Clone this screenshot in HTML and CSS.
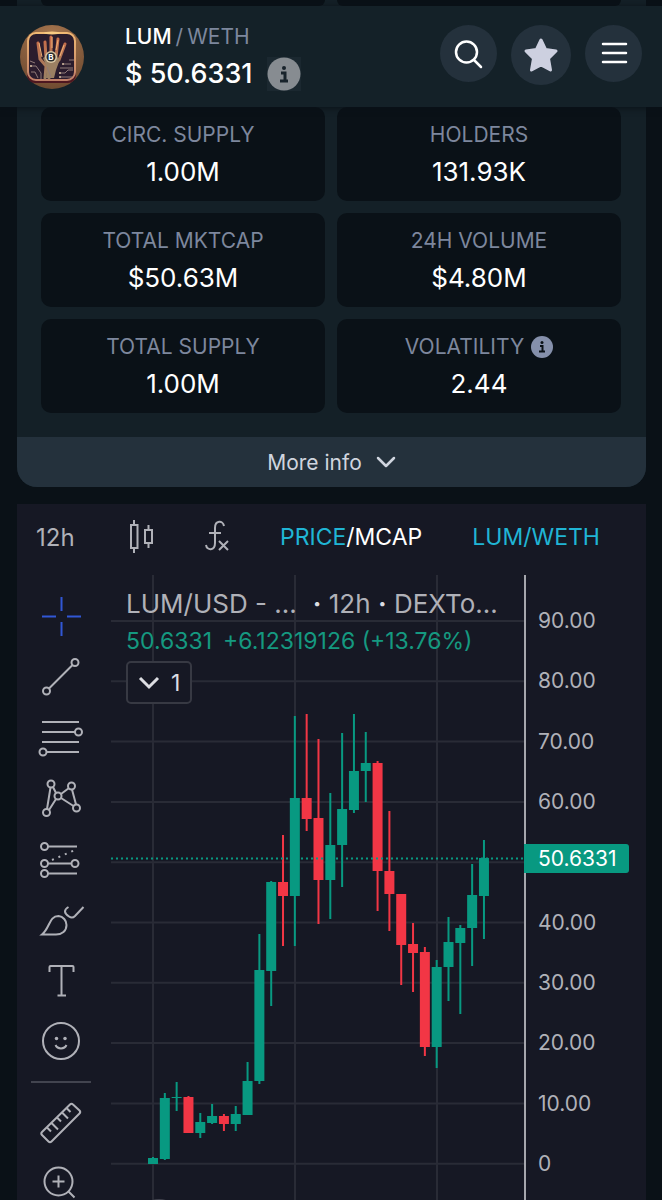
FILE: index.html
```html
<!DOCTYPE html>
<html lang="en">
<head>
  <meta charset="UTF-8">
  <meta name="viewport" content="width=device-width, initial-scale=1.0">
  <title>LUM/WETH</title>
  <link rel="stylesheet" href="styles.css">
</head>
<body>

  <div class="panel panel-peek">
    <div class="peek"></div>
    <div class="peek"></div>
  </div>

  <header class="header">
    <svg class="avatar" width="64" height="64" viewBox="0 0 64 64">
      <defs>
        <radialGradient id="gold" cx="50%" cy="20%" r="80%">
          <stop offset="0" stop-color="#a97850"/>
          <stop offset="1" stop-color="#704b31"/>
        </radialGradient>
        <linearGradient id="frame" x1="0" y1="0" x2="0" y2="1">
          <stop offset="0" stop-color="#f0b873"/>
          <stop offset="1" stop-color="#c08069"/>
        </linearGradient>
        <linearGradient id="hand" x1="0" y1="0" x2="0" y2="1">
          <stop offset="0" stop-color="#c96b48"/>
          <stop offset="1" stop-color="#9b8063"/>
        </linearGradient>
      </defs>
      <circle cx="32" cy="32" r="32" fill="url(#gold)"/>
      <rect x="7" y="9" width="49" height="49" rx="8" fill="#4e1720"/>
      <rect x="8" y="8" width="47" height="47" rx="8" fill="#2a1c2d" stroke="url(#frame)" stroke-width="2"/>
      <path d="M25 53L26 41L20 34L18 18M26 33L25 17M31 31L31 12M36 32L38 14M39 35L45 19M38 36L29 45V53" fill="none" stroke="url(#hand)" stroke-width="3" stroke-linecap="round" stroke-linejoin="round"/>
      <path d="M23 33L31 28L40 34L36 45L34 53H26L27 43z" fill="#9b8063"/>
      <path d="M32 12V23M38 15L36 25M19 18L22 32M44 20L40 31" fill="none" stroke="#efb175" stroke-width="1"/>
      <path d="M10 41H16L21 48V54M11 47H15L18 53M10 36L15 38M40 43H53M39 48H45L48 45H53M40 52H52M43 39H51M49 35H54M27 42L31 52" fill="none" stroke="#8f7a78" stroke-width="1"/>
      <circle cx="11" cy="41" r="1" fill="#d6bca1"/>
      <circle cx="40" cy="48" r="1" fill="#d6bca1"/>
      <circle cx="43" cy="39" r="1" fill="#d6bca1"/>
      <circle cx="40" cy="52" r="1" fill="#d6bca1"/>
      <ellipse cx="32" cy="8" rx="8" ry="1.500" fill="#f8ca82"/>
      <circle cx="31" cy="32" r="6" fill="#d6c4a2"/>
      <circle cx="31" cy="32" r="4.500" fill="#252a2c"/>
      <text class="coin" x="31" y="35" text-anchor="middle">B</text>
    </svg>
    <div class="pair">
      <div class="pair-name">LUM<span class="quote"><i>/</i>WETH</span></div>
      <div class="pair-price">
        <span>$ 50.6331</span>
        <button class="info-btn" aria-label="Price info">
          <svg width="34" height="34" viewBox="0 0 34 34">
            <circle cx="17" cy="17" r="16.500" fill="#878c91"/>
            <circle cx="17" cy="11" r="2" fill="#18232b"/>
            <path d="M14 16H18V24M13 24H21" fill="none" stroke="#18232b" stroke-width="3"/>
          </svg>
        </button>
      </div>
    </div>
    <nav class="actions">
      <button class="round" aria-label="Search">
        <svg width="32" height="32" viewBox="0 0 32 32" fill="none" stroke="#fff" stroke-width="2.5" stroke-linecap="round">
          <circle cx="13.500" cy="14" r="10.500"/>
          <path d="M21 22L28 29"/>
        </svg>
      </button>
      <button class="round round-star" aria-label="Favourite">
        <svg width="36" height="36" viewBox="0 0 36 36">
          <path d="M18 3L22.500 12.500L33 14L25.500 21.500L27.500 33L18 28L8.500 33L10.500 21.500L3 14L13.500 12.500z" fill="#cdd0e0" stroke="#cdd0e0" stroke-width="3" stroke-linejoin="round"/>
        </svg>
      </button>
      <button class="round" aria-label="Menu">
        <svg width="28" height="28" viewBox="0 0 28 28" stroke="#fff" stroke-width="2.500" stroke-linecap="round">
          <path d="M3 4H26M3 13H26M3 22H26"/>
        </svg>
      </button>
    </nav>
  </header>

  <section class="panel panel-main">
    <div class="stats">
      <div class="stat">
        <span class="label">CIRC. SUPPLY</span>
        <span class="value">1.00M</span>
      </div>
      <div class="stat">
        <span class="label">HOLDERS</span>
        <span class="value">131.93K</span>
      </div>
      <div class="stat">
        <span class="label">TOTAL MKTCAP</span>
        <span class="value">$50.63M</span>
      </div>
      <div class="stat">
        <span class="label">24H VOLUME</span>
        <span class="value">$4.80M</span>
      </div>
      <div class="stat">
        <span class="label">TOTAL SUPPLY</span>
        <span class="value">1.00M</span>
      </div>
      <div class="stat">
        <span class="label">VOLATILITY
          <svg width="22" height="22" viewBox="0 0 22 22">
            <circle cx="11" cy="11" r="11" fill="#8590ab"/>
            <circle cx="11" cy="6.500" r="1.500" fill="#0a1117"/>
            <path d="M9 10H11.500V15.500M8 15.500H14" fill="none" stroke="#0a1117" stroke-width="2"/>
          </svg>
        </span>
        <span class="value">2.44</span>
      </div>
    </div>
    <button class="more">More info
      <svg width="20" height="14" viewBox="0 0 20 14">
        <path d="M2 3L10 11L18 3" fill="none" stroke="#d0d5df" stroke-width="2.500" stroke-linecap="round" stroke-linejoin="round"/>
      </svg>
    </button>
  </section>

  <section class="chart">
    <div class="chart-top">
      <button class="interval">12h</button>
      <button aria-label="Candles">
        <svg width="26" height="36" viewBox="0 0 26 36" fill="none" stroke="#b0b1b8" stroke-width="2">
          <path d="M3 6H9.500V29H3zM6 1V6M6 29V34M17 11H24V24H17zM20.500 6V11M20.500 24V29"/>
        </svg>
      </button>
      <button aria-label="Indicators">
        <svg width="26" height="36" viewBox="0 0 26 36" fill="none" stroke="#b0b1b8" stroke-width="2">
          <path d="M20 7C19 1 11 1 11 9V24C11 32 3 32 2 26M5 14H17M15 22L24 31M24 22L15 31"/>
        </svg>
      </button>
      <button class="cyan">PRICE<span class="white">/MCAP</span></button>
      <button class="cyan">LUM/WETH</button>
    </div>

    <div class="chart-body">
      <div class="tools">
        <button class="tool" aria-label="Cross">
          <svg class="blue" viewBox="0 0 48 48"><path d="M5 24.500H19M30 24.500H44M24.500 5V19M24.500 30V44"/></svg>
        </button>
        <button class="tool" aria-label="Trend line">
          <svg viewBox="0 0 48 48"><circle cx="9.500" cy="38" r="3.500"/><circle cx="38" cy="9.500" r="3.500"/><path d="M12 35.500L35.500 12"/></svg>
        </button>
        <button class="tool" aria-label="Fib retracement">
          <svg viewBox="0 0 48 48"><path d="M5 8H42M5 18H38M5 28H42M10 38H42"/><circle cx="41.500" cy="18" r="3.500"/><circle cx="6" cy="38" r="3.500"/></svg>
        </button>
        <button class="tool" aria-label="Patterns">
          <svg viewBox="0 0 48 48">
            <path d="M13.500 12.500L10 34M16 12L19 18M12 35L19 24M24 19L32 13M35 14.500L39 29.500M24 23L36.500 31"/>
            <circle cx="14" cy="9" r="3.500"/><circle cx="34.500" cy="11" r="3.500"/><circle cx="21" cy="21" r="3.500"/><circle cx="9.500" cy="37.500" r="3.500"/><circle cx="39.500" cy="33" r="3.500"/>
          </svg>
        </button>
        <button class="tool" aria-label="Prediction">
          <svg viewBox="0 0 48 48">
            <circle cx="7.500" cy="10.500" r="3.500"/><circle cx="7.500" cy="27.500" r="3.500"/><circle cx="38" cy="27.500" r="3.500"/><circle cx="7.500" cy="37.500" r="3.500"/>
            <path d="M11 10.500H40M11 27.500H34.500M11 37.500H40"/>
            <path d="M15 24L38 14" stroke-dasharray="2 5"/>
          </svg>
        </button>
        <button class="tool" aria-label="Brush">
          <svg viewBox="0 0 48 48"><path d="M5 37.500C13 31 12 19 21.500 19A9 9 0 0 1 29.500 28C29.500 34 25 37.500 19 37.500zM31.500 10C26.500 13 27 16 32 19.500C34 21 36 21 38 19L46.500 10"/></svg>
        </button>
        <button class="tool" aria-label="Text">
          <svg viewBox="0 0 48 48"><path d="M12.500 14V9Q12.500 8 13.500 8H35.500Q36.500 8 36.500 9V14M24.500 8V37.500M20.500 37.500H29"/></svg>
        </button>
        <button class="tool" aria-label="Emoji">
          <svg viewBox="0 0 48 48"><circle cx="24" cy="22" r="18"/><circle class="dot" cx="19.500" cy="19.500" r="1.750"/><circle class="dot" cx="28" cy="19.500" r="1.750"/><path d="M18.500 26C20.500 30.500 27.500 30.500 29.500 26"/></svg>
        </button>
        <hr>
        <button class="tool" aria-label="Measure">
          <svg viewBox="0 0 48 48"><path d="M33 6.500Q34.500 5 36 6.500L42.500 12.500Q44 14 42.500 15.500L14.500 43.500Q13 45 11.500 43.500L5 37Q3.500 35.500 5 34zM10 29.500L14 33.500M14.500 25L21 31.500M20 19.500L24 23.500M25 14.500L31 20.500M29.500 10L33.500 14"/></svg>
        </button>
        <button class="tool" aria-label="Zoom in">
          <svg viewBox="0 0 48 48"><circle cx="21.500" cy="22.500" r="14"/><path d="M15.500 22.500H27.500M21.500 16.500V28.500M31.500 32.500L37.500 38.500"/></svg>
        </button>
      </div>

      <div class="plot">
        <svg id="candles" viewBox="111 575 414 625" preserveAspectRatio="xMinYMin slice"></svg>
        <div class="legend">
          <div class="legend-title">
            <span>LUM/USD - ...</span>
            <span><b>·</b> 12h <b>·</b> DEXTo...</span>
          </div>
          <div class="legend-values">
            <span>50.6331</span>
            <span>+6.12319126 (+13.76%)</span>
          </div>
          <button class="legend-btn">
            <svg width="22" height="14" viewBox="0 0 22 14"><path d="M2 2L11 11L20 2" fill="none" stroke="#dcdde2" stroke-width="3"/></svg>
            1
          </button>
        </div>
      </div>

      <div class="axis">
        <ul>
          <li>90.00</li>
          <li>80.00</li>
          <li>70.00</li>
          <li>60.00</li>
          <li class="current"><span>50.6331</span></li>
          <li>40.00</li>
          <li>30.00</li>
          <li>20.00</li>
          <li>10.00</li>
          <li>0</li>
        </ul>
      </div>
    </div>
  </section>

  <script src="chart.js"></script>
</body>
</html>
```
FILE: styles.css
```css
* {
  box-sizing: border-box;
}
body {
  margin: 0;
  height: 100vh;
  overflow: hidden;
  display: flex;
  flex-direction: column;
  background: #0a1117;
  color: #fff;
  font-family: Inter, "Liberation Sans", sans-serif;
}
button {
  margin: 0;
  padding: 0;
  border: 0;
  background: none;
  color: inherit;
  font: inherit;
}
svg {
  display: block;
}

/* stats panel */
.panel {
  flex: none;
  margin: 0 16px 0 17px;
  background: #142027;
}
.panel-peek {
  display: grid;
  grid-template-columns: 1fr 1fr;
  gap: 12px;
  padding: 0 25px 0 24px;
}
.peek {
  height: 6px;
  background: #0a1117;
  border-radius: 0 0 6px 6px;
}
.panel-main {
  border-radius: 0 0 20px 20px;
  overflow: hidden;
}
.stats {
  display: grid;
  grid-template-columns: 1fr 1fr;
  gap: 12px;
  padding: 0 25px 24px 24px;
}
.stat {
  height: 94px;
  padding-top: 11px;
  border-radius: 10px;
  background: #0a1117;
  text-align: center;
}
.label,
.value {
  display: flex;
  justify-content: center;
  align-items: center;
}
.label {
  gap: 7px;
  color: #7d879d;
  font-size: 21px;
  line-height: 34px;
}
.value {
  font-size: 26px;
  line-height: 40px;
}
.more {
  display: flex;
  justify-content: center;
  align-items: center;
  gap: 14px;
  width: 100%;
  height: 50px;
  background: #24313c;
  color: #d0d5df;
  font-size: 21px;
}

/* header */
.header {
  display: flex;
  align-items: center;
  flex: none;
  height: 101px;
  padding: 0 20px;
  background: #142128;
  box-shadow: 0 1px 6px #0a1117;
  position: relative;
}
.coin {
  fill: #fff;
  font-size: 8px;
  font-weight: 700;
}
.pair {
  flex: 1;
  margin-left: 41px;
  white-space: nowrap;
}
.pair-name {
  font-size: 21px;
  font-weight: 500;
  line-height: 34px;
}
.quote {
  color: #7d879d;
  font-weight: 400;
}
.quote i {
  margin: 0 4px;
  font-style: normal;
}
.pair-price {
  display: flex;
  align-items: center;
  gap: 14px;
  font-size: 27px;
  font-weight: 500;
  line-height: 40px;
}
.info-btn {
  background: #1b2830;
}
.actions {
  display: flex;
  align-items: flex-start;
  gap: 14px;
  padding-bottom: 3px;
}
.round {
  display: flex;
  align-items: center;
  justify-content: center;
  width: 57px;
  height: 57px;
  border-radius: 50%;
  background: #24313c;
}
.round-star {
  width: 60px;
  height: 60px;
}

/* chart */
.chart {
  flex: 1;
  min-height: 0;
  display: flex;
  flex-direction: column;
  margin: 17px 16px 0 17px;
  background: #161824;
  color: #b0b1b8;
}
.chart-top {
  display: flex;
  align-items: center;
  gap: 50px;
  height: 66px;
  margin-bottom: 5px;
  padding-left: 19px;
  font-size: 23px;
  white-space: nowrap;
}
.interval {
  width: 42px;
  font-size: 24px;
  text-align: left;
}
.cyan {
  color: #20b5d5;
}
.white {
  color: #fff;
}
.chart-body {
  flex: 1;
  min-height: 0;
  overflow: hidden;
  display: grid;
  grid-template-columns: 88px 1fr 122px;
}
.tools {
  display: flex;
  flex-direction: column;
  align-items: center;
  padding-top: 10px;
}
.tools hr {
  flex: none;
  width: 60px;
  height: 2px;
  margin: 8px 0;
  border: 0;
  background: #42444f;
}
.tool {
  flex: none;
  display: flex;
  align-items: center;
  height: 61px;
}
.tool svg {
  width: 48px;
  height: 48px;
  fill: none;
  stroke: #b0b1b8;
  stroke-width: 2;
}
.tool .blue {
  stroke: #3157d5;
}
.tool .dot {
  fill: #b0b1b8;
  stroke: none;
}
.plot {
  position: relative;
  margin-left: 6px;
}
#candles {
  width: 100%;
  height: 625px;
}
.grid {
  stroke: #292b36;
  stroke-width: 2;
}
.up {
  fill: #089981;
}
.down {
  fill: #f23645;
}
.last {
  stroke: #089981;
  stroke-width: 2;
  stroke-dasharray: 2 3;
}
.legend {
  position: absolute;
  top: 12px;
  left: 15px;
  white-space: nowrap;
}
.legend-title {
  display: flex;
  gap: 16px;
  font-size: 26px;
  line-height: 34px;
}
.legend-title b {
  color: #dcdde2;
}
.legend-values {
  display: flex;
  gap: 11px;
  color: #159980;
  font-size: 23px;
  line-height: 40px;
}
.legend-btn {
  display: flex;
  align-items: center;
  gap: 11px;
  height: 43px;
  padding: 0 10px;
  border: 2px solid #373943;
  border-radius: 5px;
  background: #161824;
  color: #dcdde2;
  font-size: 23px;
}
.axis {
  border-left: 2px solid #a5a6ad;
}
.axis ul {
  display: flex;
  flex-direction: column;
  justify-content: space-between;
  height: 567px;
  margin: 34px 0 0;
  padding: 0 0 0 12px;
  list-style: none;
  font-size: 21px;
  line-height: 24px;
}
.current {
  position: relative;
  height: 24px;
}
.current span {
  position: absolute;
  top: -6px;
  left: -14px;
  width: 105px;
  padding-left: 14px;
  border-radius: 0 3px 3px 0;
  background: #089981;
  color: #fff;
  line-height: 29px;
}
```
FILE: chart.js
```js
// wick top, body top, body bottom, wick bottom, direction
const candles = [
  [1157, 1158, 1164, 1164, "up"],
  [1093, 1098, 1159, 1160, "up"],
  [1082, 1097, 1098, 1111, "up"],
  [1096, 1097, 1133, 1133, "down"],
  [1113, 1122, 1133, 1138, "up"],
  [1104, 1116, 1123, 1124, "up"],
  [1114, 1116, 1124, 1131, "down"],
  [1106, 1114, 1124, 1131, "up"],
  [1062, 1081, 1115, 1115, "up"],
  [934, 970, 1081, 1084, "up"],
  [881, 882, 971, 1006, "up"],
  [835, 882, 896, 946, "down"],
  [716, 798, 896, 946, "up"],
  [714, 798, 819, 831, "down"],
  [739, 818, 880, 924, "down"],
  [793, 845, 880, 919, "up"],
  [733, 809, 845, 887, "up"],
  [714, 771, 810, 813, "up"],
  [732, 763, 771, 802, "up"],
  [761, 763, 871, 911, "down"],
  [811, 871, 894, 931, "down"],
  [894, 894, 945, 985, "down"],
  [923, 944, 953, 992, "down"],
  [947, 952, 1047, 1056, "down"],
  [960, 967, 1047, 1068, "up"],
  [917, 942, 967, 1001, "up"],
  [925, 928, 943, 1014, "up"],
  [864, 895, 928, 966, "up"],
  [840, 858, 896, 939, "up"]
];

let out = "";

[153, 295, 437].forEach(x => {
  out += `<line class="grid" x1="${x}" x2="${x}" y1="575" y2="1200"/>`;
});
for (let i = 0; i < 10; i++) {
  const y = 621 + i * 60.3;
  out += `<line class="grid" x1="111" x2="525" y1="${y}" y2="${y}"/>`;
}

candles.forEach(([high, top, bottom, low, dir], i) => {
  const x = 153 + i * 11.82;
  out += `<rect class="${dir}" x="${x - 1}" y="${high}" width="2" height="${low - high}"/>`;
  out += `<rect class="${dir}" x="${x - 5}" y="${top}" width="10" height="${bottom - top}"/>`;
});

// last price line and the top edge of the logo badge
out += `<line class="last" x1="111" x2="525" y1="858.5" y2="858.5"/>`;
out += `<circle cx="159" cy="1223" r="24" fill="#42444f"/>`;

document.getElementById("candles").innerHTML = out;
```
